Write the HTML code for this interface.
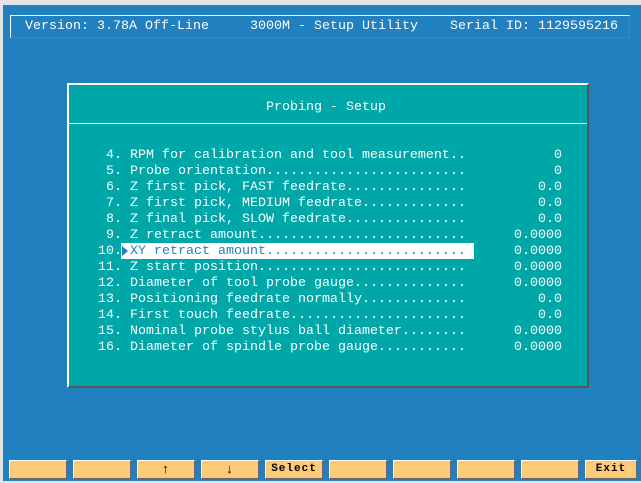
<!DOCTYPE html>
<html><head><meta charset="utf-8"><style>
html,body{margin:0;padding:0}
body{width:641px;height:483px;background:#e4e4e4;position:relative;overflow:hidden;font-family:"Liberation Mono","DejaVu Sans Mono",monospace}
#blue{position:absolute;left:3px;top:5px;width:638px;height:476px;background:#2180bf}
.t{position:absolute;white-space:pre;font-size:13.33px;line-height:16px;color:#fff}
#hdr{position:absolute;left:10px;top:15px;width:618px;height:21px;border-top:1px solid #fff;border-left:1px solid #fff;border-right:1px solid #777;border-bottom:1px solid #777}
#panel{position:absolute;left:67px;top:83px;width:518px;height:301px;background:#00a7a8;border-top:2px solid #fff;border-left:2px solid #fff;border-right:2px solid #555;border-bottom:2px solid #555}
#div{position:absolute;left:69px;top:123px;width:518px;height:1px;background:#fff}
#hl{position:absolute;left:121px;top:243px;width:353px;height:16px;background:#fff}
.v{position:absolute;right:79px;white-space:pre;font-size:13.33px;line-height:16px;color:#fff}
.b{position:absolute;top:460px;width:56px;height:17px;background:#fdcb78;border-top:1px solid #fff;border-left:1px solid #fff;border-right:1px solid #666;border-bottom:1px solid #666;font:bold 11px "Liberation Mono",monospace;color:#000;text-align:center;line-height:17px;letter-spacing:1px}
.ar{font-size:13px;font-weight:bold}
</style></head><body>
<div id="blue"></div>
<div id="hdr"></div>
<div class="t" style="left:25px;top:19px">Version: 3.78A Off-Line</div>
<div class="t" style="left:250px;top:19px">3000M - Setup Utility</div>
<div class="t" style="left:450px;top:19px">Serial ID: 1129595216</div>
<div id="panel"></div>
<div id="div"></div>
<div class="t" style="left:266px;top:100px">Probing - Setup</div>
<div id="hl"></div>
<svg style="position:absolute;left:121px;top:245px" width="8" height="12"><polygon points="1,1 7,6 1,11" fill="#2180bf"/></svg>
<div class="t" style="left:98px;top:148px"> 4. RPM for calibration and tool measurement..
 5. Probe orientation.........................
 6. Z first pick, FAST feedrate...............
 7. Z first pick, MEDIUM feedrate.............
 8. Z final pick, SLOW feedrate...............
 9. Z retract amount..........................
10.
11. Z start position..........................
12. Diameter of tool probe gauge..............
13. Positioning feedrate normally.............
14. First touch feedrate......................
15. Nominal probe stylus ball diameter........
16. Diameter of spindle probe gauge...........</div>
<div class="t" style="left:130px;top:244px;color:#2180bf">XY retract amount.........................</div>
<div class="v" style="top:148px;text-align:right">0
0
0.0
0.0
0.0
0.0000
0.0000
0.0000
0.0000
0.0
0.0
0.0000
0.0000</div>
<div class="b" style="left:9px"></div>
<div class="b" style="left:73px"></div>
<div class="b" style="left:137px"><span class="ar">↑</span></div>
<div class="b" style="left:201px"><span class="ar">↓</span></div>
<div class="b" style="left:265px">Select</div>
<div class="b" style="left:329px"></div>
<div class="b" style="left:393px"></div>
<div class="b" style="left:457px"></div>
<div class="b" style="left:521px"></div>
<div class="b" style="left:585px;width:50px">Exit</div>
</body></html>
